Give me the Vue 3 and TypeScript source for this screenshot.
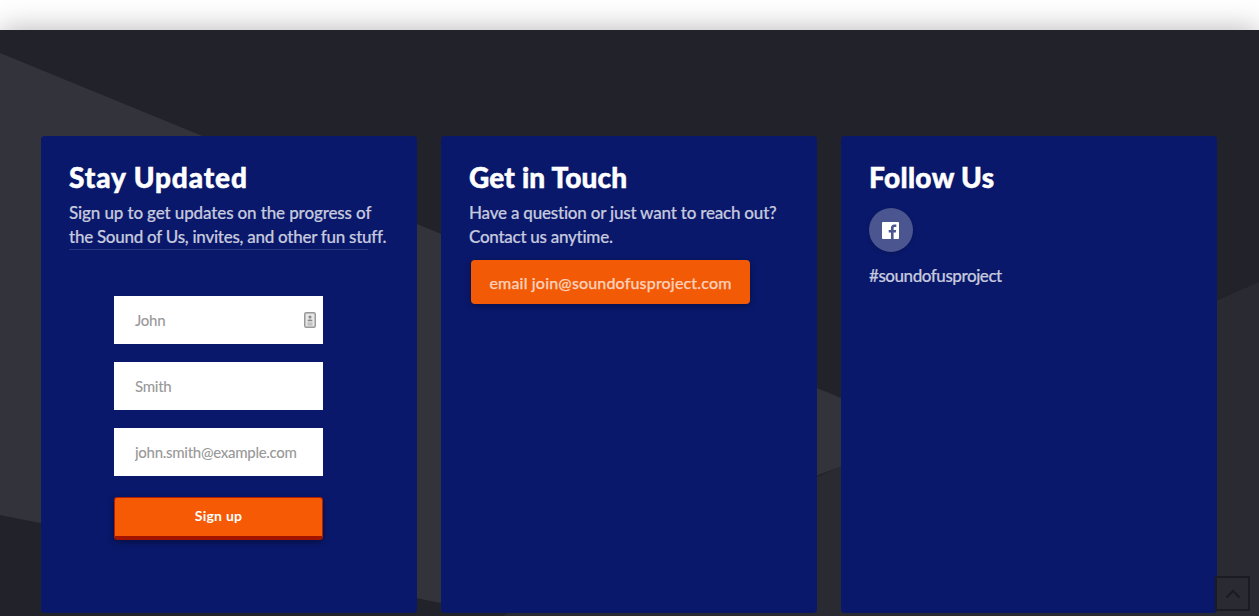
<script setup lang="ts">
const fields: { placeholder: string; icon?: boolean }[] = [
  { placeholder: 'John', icon: true },
  { placeholder: 'Smith' },
  { placeholder: 'john.smith@example.com' },
]
</script>

<template>
  <div class="page">
    <div class="topbar"></div>
    <section class="footer">
      <svg class="bg" viewBox="0 0 1259 586" width="1259" height="586" aria-hidden="true">
        <polygon points="502,586 1259,252 1259,586" fill="#2a2a33" />
        <polygon points="0,23 929,404 461,577 0,485" fill="#33333b" />
      </svg>
      <div class="cards">
        <article class="card">
          <h2 class="wide">Stay Updated</h2>
          <p class="text">Sign up to get updates on the progress of<br /><span class="tight">the Sound of Us, invites, and other fun stuff.</span></p>
          <hr class="rule" />
          <form class="form" @submit.prevent>
            <label v-for="f in fields" :key="f.placeholder" class="field">
              <input type="text" :placeholder="f.placeholder" />
              <svg v-if="f.icon" class="contact" viewBox="0 0 12 16" width="12" height="16" aria-hidden="true">
                <rect x="0.75" y="0.75" width="10.5" height="14.5" rx="1.5" fill="#e6e6e6" stroke="#999" stroke-width="1.5" />
                <circle cx="6" cy="5" r="1.5" fill="#888" />
                <path d="M3.5 9.2c0-1.3 1-1.7 2.5-1.700s2.5.4 2.5 1.700z" fill="#888" />
                <rect x="3.5" y="10.6" width="5" height="1" fill="#aaa" />
                <rect x="3.5" y="12.4" width="5" height="1" fill="#aaa" />
              </svg>
            </label>
            <button class="signup" type="submit">Sign up</button>
          </form>
        </article>

        <article class="card">
          <h2 class="close">Get in Touch</h2>
          <p class="text narrow">Have a question or just want to reach out?<br /><span class="tight">Contact us anytime.</span></p>
          <a class="email" href="#">email join@soundofusproject.com</a>
        </article>

        <article class="card">
          <h2>Follow Us</h2>
          <a class="social" href="#" aria-label="Facebook">
            <svg viewBox="0 0 17 17" width="17" height="17" aria-hidden="true">
              <path fill="#fff" fill-rule="evenodd" d="M1 0h15a1 1 0 0 1 1 1v15a1 1 0 0 1-1 1h-4.400v-6.500h2.200l.35-2.600h-2.550V6.200c0-.75.2-1.250 1.280-1.250H14.300V2.600c-.25-.03-1.050-.1-2-.1-2 0-3.350 1.200-3.350 3.450v1.950H6.700v2.600h2.250V17H1a1 1 0 0 1-1-1V1a1 1 0 0 1 1-1z" />
            </svg>
          </a>
          <p class="tag">#soundofusproject</p>
        </article>
      </div>
      <a class="totop" href="#" aria-label="Back to top">
        <svg viewBox="0 0 16 10" width="16" height="10" aria-hidden="true">
          <path d="M1.500 8.500 8 2l6.500 6.500" fill="none" stroke="#1b1b24" stroke-width="2" />
        </svg>
      </a>
    </section>
  </div>
</template>

<style>
html, body { margin: 0; background: #22222a; }
</style>

<style scoped>
.page {
  height: 616px;
  overflow: hidden;
  font-family: "Lato", "Liberation Sans", sans-serif;
}
.topbar {
  height: 30px;
  background: #fff;
}
.footer {
  position: relative;
  height: 586px;
  background: #22222a;
  box-shadow: 0 0 28px rgba(0, 0, 0, 0.3);
}
.bg {
  position: absolute;
  left: 0;
  top: 0;
  display: block;
}
.cards {
  position: relative;
  display: grid;
  grid-template-columns: repeat(3, 376px);
  gap: 24px;
  padding: 106px 0 0 41px;
}
.card {
  height: 477px;
  box-sizing: border-box;
  padding: 26px 28px;
  background: #09186b;
  border-radius: 4px;
}
h2 {
  margin: 0;
  font-size: 28px;
  line-height: 30px;
  font-weight: 900;
  letter-spacing: 0.35px;
  color: #fff;
  -webkit-text-stroke: 0.5px #fff;
}
h2.wide {
  letter-spacing: 0.9px;
}
h2.close {
  letter-spacing: 0.18px;
}
.text {
  margin: 9px 0 0;
  font-size: 17px;
  line-height: 24px;
  font-weight: 500;
  letter-spacing: -0.12px;
  color: #c6c9de;
  -webkit-text-stroke: 0.2px #c6c9de;
  white-space: nowrap;
}
.text.narrow {
  letter-spacing: -0.2px;
}
.tight {
  letter-spacing: -0.26px;
}
.rule {
  width: 299px;
  height: 1px;
  margin: 0;
  border: 0;
  background: #2a3880;
}
.form {
  display: flex;
  flex-direction: column;
  gap: 18px;
  width: 209px;
  margin: 46px 0 0 45px;
}
.field {
  position: relative;
  display: block;
}
.field input {
  display: block;
  box-sizing: border-box;
  width: 209px;
  height: 48px;
  padding: 0 21px;
  border: 0;
  border-radius: 0;
  background: #fff;
  font: 500 15px "Lato", "Liberation Sans", sans-serif;
  letter-spacing: -0.3px;
}
.field input::placeholder {
  color: #999;
  opacity: 1;
}
.contact {
  position: absolute;
  right: 7px;
  top: 16px;
}
.signup {
  height: 43px;
  margin-top: 3px;
  padding: 0 0 3px;
  border: 1px solid #b32000;
  border-bottom: 4px solid #a31400;
  border-radius: 3px;
  background: #f75a04;
  color: #fff;
  font: 700 14px "Lato", "Liberation Sans", sans-serif;
  letter-spacing: 0.25px;
  box-shadow: 0 2px 6px rgba(0, 0, 0, 0.4);
}
.email {
  display: flex;
  align-items: center;
  justify-content: center;
  width: 279px;
  height: 44px;
  margin: 11px 0 0 2px;
  border-radius: 4px;
  background: #f25a05;
  color: #fcd0bb;
  font-size: 16px;
  font-weight: 500;
  letter-spacing: 0.16px;
  -webkit-text-stroke: 0.25px #fcd0bb;
  text-decoration: none;
  box-shadow: 0 2px 6px rgba(0, 0, 0, 0.35);
}
.social {
  display: flex;
  align-items: center;
  justify-content: center;
  box-sizing: border-box;
  width: 44px;
  height: 44px;
  margin-top: 16px;
  padding-right: 1px;
  border-radius: 50%;
  background: #4b5590;
  box-shadow: 0 1px 4px rgba(0, 0, 0, 0.2);
}
.tag {
  margin: 12px 0 0;
  font-size: 17px;
  line-height: 24px;
  font-weight: 500;
  letter-spacing: -0.45px;
  color: #c6c9de;
  -webkit-text-stroke: 0.2px #c6c9de;
}
.totop {
  position: absolute;
  left: 1215px;
  top: 546px;
  box-sizing: border-box;
  width: 35px;
  height: 35px;
  display: flex;
  align-items: center;
  justify-content: center;
  border: 2px solid #1b1b24;
}
</style>
